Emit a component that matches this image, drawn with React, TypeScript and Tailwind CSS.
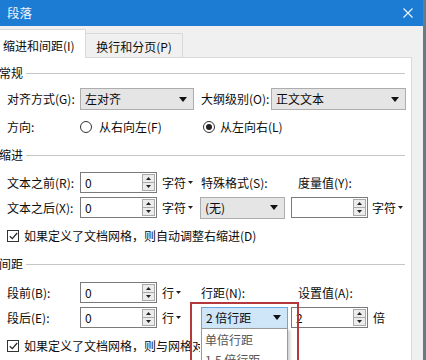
import React from "react"

const Down = () => (
    <svg width="8" height="5" viewBox="0 0 8 5">
        <path d="M0 0H8L4 5Z" fill="#111" />
    </svg>
)

const Small = () => (
    <svg width="5" height="3" viewBox="0 0 5 3" className="ml-[2px]">
        <path d="M0 0H5L2.5 3Z" fill="#222" />
    </svg>
)

function Spin() {
    return (
        <div className="my-px mr-px flex h-[17px] w-[13px] flex-col border border-[#a9a9a9] bg-[#ececec]">
            <div className="flex flex-1 items-center justify-center border-b border-[#a9a9a9]">
                <svg width="5" height="3" viewBox="0 0 5 3"><path d="M0 3H5L2.5 0Z" fill="#222" /></svg>
            </div>
            <div className="flex flex-1 items-center justify-center">
                <svg width="5" height="3" viewBox="0 0 5 3"><path d="M0 0H5L2.5 3Z" fill="#222" /></svg>
            </div>
        </div>
    )
}

function NumInput({ value }: { value: string }) {
    return (
        <div className="flex h-[21px] w-[77px] shrink-0 items-center border border-[#7a7a7a] bg-white pl-[4px]">
            <span className="flex-1 leading-none">{value}</span>
            <Spin />
        </div>
    )
}

function Select({ value, className }: { value: string; className: string }) {
    return (
        <div className={"flex shrink-0 items-center justify-between border pl-[4px] pr-[6px] " + className}>
            <span className="leading-none">{value}</span>
            <Down />
        </div>
    )
}

function Section({ title, className }: { title: string; className: string }) {
    return (
        <div className={"flex h-[18px] items-center pr-[6px] " + className}>
            <span className="-ml-[1px] leading-none">{title}</span>
            <div className="ml-[3px] h-px flex-1 bg-[#c6c6c6]" />
        </div>
    )
}

function Check({ text, className, textClass = "" }: { text: string; className: string; textClass?: string }) {
    return (
        <div className={"flex h-[18px] items-center whitespace-nowrap pl-[7px] " + className}>
            <div className="flex h-[12px] w-[12px] shrink-0 items-center justify-center border border-[#333] bg-white">
                <svg width="9" height="8" viewBox="0 0 9 8">
                    <path d="M0.8 4.2L3.3 6.6L8.2 1" stroke="#222" strokeWidth="1.2" fill="none" />
                </svg>
            </div>
            <span className={"ml-[5px] leading-none " + textClass}>{text}</span>
        </div>
    )
}

function Label({ children, className = "w-[80px] pl-[7px]" }: { children: React.ReactNode; className?: string }) {
    return <span className={"shrink-0 whitespace-nowrap leading-none " + className}>{children}</span>
}

export default function App() {
    return (
        <div className="relative flex h-[360px] w-[426px] overflow-hidden bg-[#6c7a88] font-['Noto_Sans_CJK_SC',sans-serif] text-[12px] text-[#0c0c0c]">
            <div className="flex h-full w-[423px] shrink-0 flex-col bg-[#f0f0f0]">
                {/* title bar */}
                <div className="flex h-[26px] shrink-0 items-center justify-between bg-[#1c7bd3] pl-[7px] pr-[10px] text-[#eef6ff]">
                    <span className="text-[12.5px] leading-none">段落</span>
                    <svg width="10" height="10" viewBox="0 0 10 10">
                        <path d="M0.5 0.5L9.5 9.5M9.5 0.5L0.5 9.5" stroke="#eaf4ff" strokeWidth="1.2" />
                    </svg>
                </div>

                {/* tabs */}
                <div className="flex h-[31px] shrink-0 items-end">
                    <div className="relative z-10 -mb-px flex h-[29px] w-[86px] items-center border border-b-0 border-l-0 border-[#d9d9d9] bg-white pl-[3px] pt-[3px] leading-none">
                        缩进和间距(I)
                    </div>
                    <div className="flex h-[24px] w-[97px] items-center justify-center border border-b-0 border-l-0 border-[#d9d9d9] bg-[#f0f0f0] pt-[2px] leading-none">
                        换行和分页(P)
                    </div>
                </div>

                {/* page */}
                <div className="flex w-[412px] flex-1 flex-col border-r border-t border-[#d9d9d9] bg-white">
                    <Section title="常规" className="mt-[6px]" />

                    <div className="mt-[6px] flex h-[22px] items-center">
                        <Label>对齐方式(G):</Label>
                        <Select value="左对齐" className="h-[22px] w-[114px] border-[#adadad] bg-[#e5e5e5]" />
                        <Label className="ml-[7px] w-[70px]">大纲级别(O):</Label>
                        <Select value="正文文本" className="h-[22px] w-[135px] border-[#adadad] bg-[#e5e5e5]" />
                    </div>

                    <div className="mt-[7px] flex h-[20px] items-center">
                        <Label>方向:</Label>
                        <div className="flex w-[123px] shrink-0 items-center">
                            <div className="h-[12px] w-[12px] rounded-full border border-[#333] bg-white" />
                            <span className="ml-[7px] leading-none">从右向左(F)</span>
                        </div>
                        <div className="flex items-center">
                            <div className="flex h-[12px] w-[12px] items-center justify-center rounded-full border border-[#333] bg-white">
                                <div className="h-[6px] w-[6px] rounded-full bg-[#222]" />
                            </div>
                            <span className="ml-[5px] leading-none">从左向右(L)</span>
                        </div>
                    </div>

                    <Section title="缩进" className="mt-[9px]" />

                    <div className="mt-[8px] flex h-[21px] items-center">
                        <Label>文本之前(R):</Label>
                        <NumInput value="0" />
                        <Label className="ml-[5px] flex w-[39px] items-center">字符<Small /></Label>
                        <Label className="w-[90px]">特殊格式(S):</Label>
                        <Label>度量值(Y):</Label>
                    </div>

                    <div className="mt-[4px] flex h-[21px] items-center">
                        <Label>文本之后(X):</Label>
                        <NumInput value="0" />
                        <Label className="ml-[5px] flex w-[38px] items-center">字符<Small /></Label>
                        <Select value="(无)" className="h-[22px] w-[85px] border-[#adadad] bg-[#e5e5e5]" />
                        <div className="ml-[6px]">
                            <NumInput value="" />
                        </div>
                        <Label className="ml-[4px] flex items-center">字符<Small /></Label>
                    </div>

                    <Check text="如果定义了文档网格，则自动调整右缩进(D)" className="mt-[9px]" />

                    <Section title="间距" className="mt-[10px]" />

                    <div className="mt-[9px] flex h-[21px] items-center">
                        <Label>段前(B):</Label>
                        <NumInput value="0" />
                        <Label className="ml-[5px] flex w-[39px] items-center">行<Small /></Label>
                        <Label className="w-[90px]">行距(N):</Label>
                        <Label>设置值(A):</Label>
                    </div>

                    <div className="mt-[4px] flex h-[21px] items-center">
                        <Label>段后(E):</Label>
                        <NumInput value="0" />
                        <Label className="ml-[5px] flex w-[39px] items-center">行<Small /></Label>
                        <Select value="2 倍行距" className="h-[22px] w-[87px] border-[#6aa6de] bg-[#cfe5f8]" />
                        <div className="ml-[3px]">
                            <NumInput value="2" />
                        </div>
                        <Label className="ml-[5px]">倍</Label>
                    </div>

                    <Check
                        text="如果定义了文档网格，则与网格对齐(W)"
                        className="mt-[9px]"
                        textClass="block w-[176px] overflow-hidden"
                    />
                </div>
            </div>

            {/* open dropdown list */}
            <div className="absolute left-[201px] top-[328px] flex h-[44px] w-[87px] flex-col border border-[#9a9a9a] bg-white pl-[3px] text-[#555] shadow-[2px_2px_3px_rgba(0,0,0,0.2)]">
                <span className="mt-[5px] leading-none">单倍行距</span>
                <span className="mt-[8px] leading-none">1.5 倍行距</span>
            </div>

            {/* red highlight */}
            <div className="absolute left-[190px] top-[302px] h-[70px] w-[109px] border-2 border-[#b4383c]" />
        </div>
    )
}
